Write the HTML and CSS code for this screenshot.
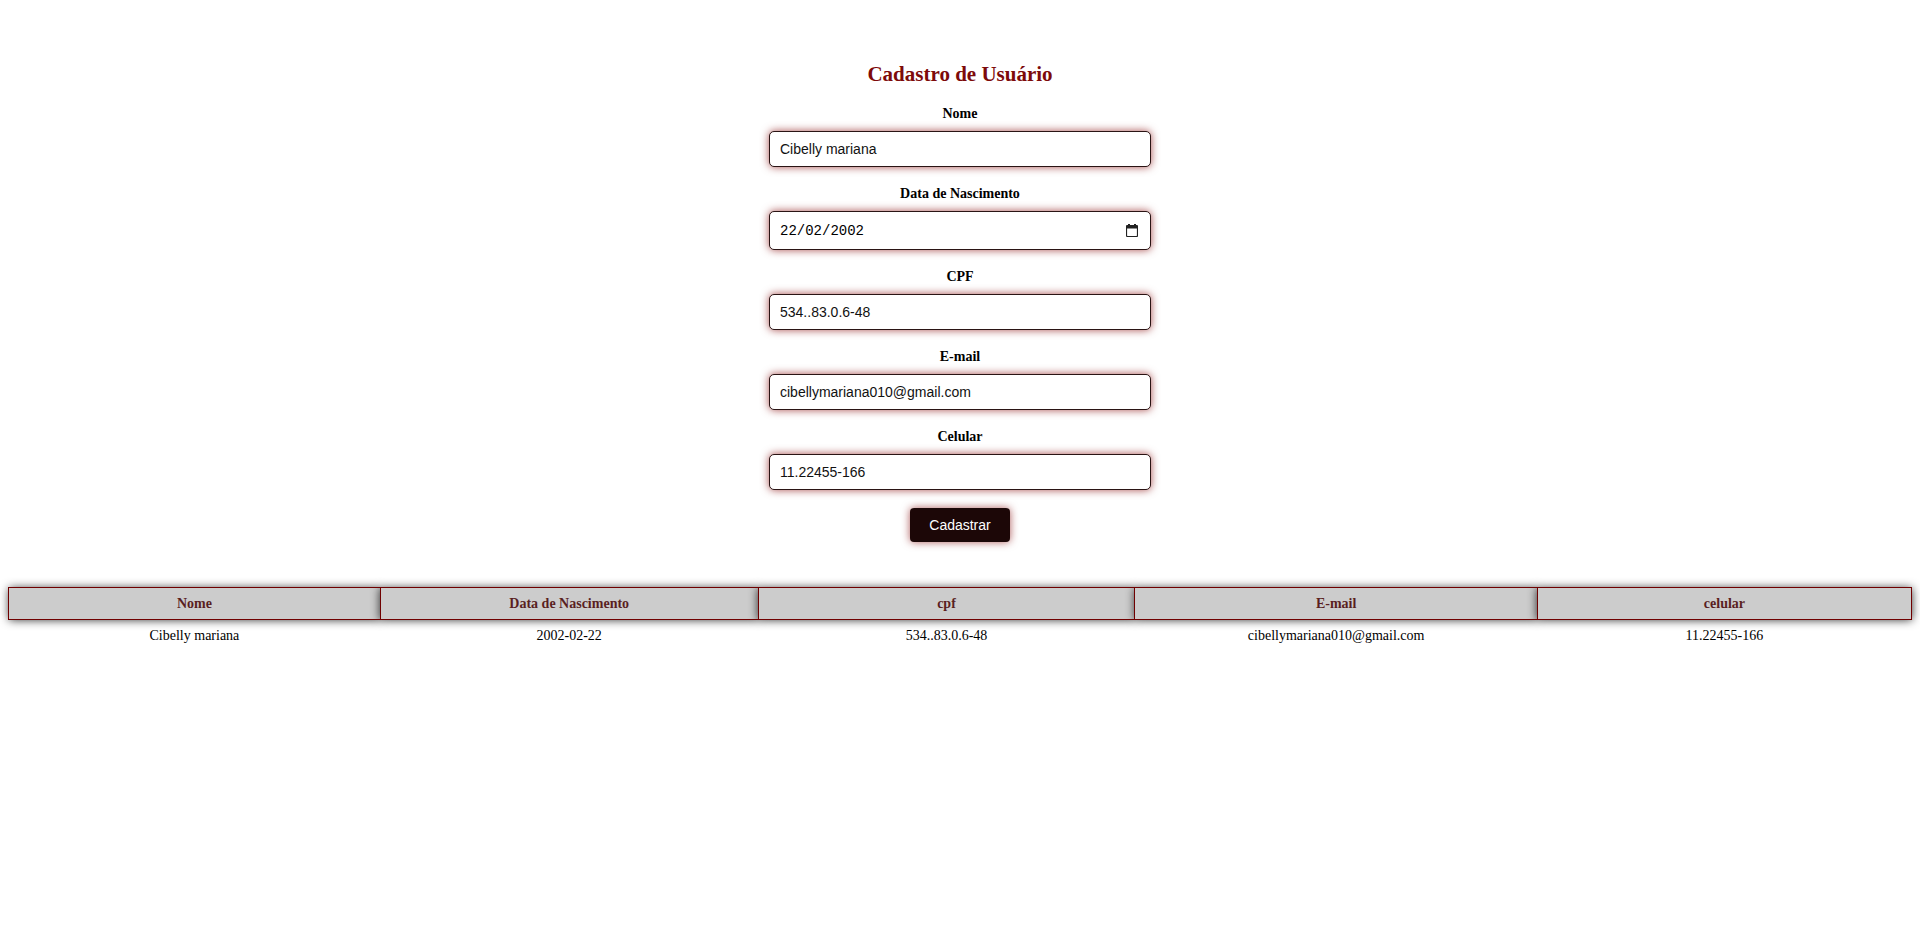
FILE: index.html
```html
<!DOCTYPE html>
<html lang="pt-BR">
<head>
<meta charset="utf-8">
<title>Cadastro de Usuário</title>
<link rel="stylesheet" href="styles.css">
</head>
<body>
<main class="page">
  <form class="form">
    <h2 class="title">Cadastro de Usuário</h2>
    <div class="field">
      <label class="label" for="nome">Nome</label>
      <input class="input" id="nome" type="text" value="Cibelly mariana">
    </div>
    <div class="field">
      <label class="label" for="nasc">Data de Nascimento</label>
      <div class="date-wrap">
        <input class="input input-date" id="nasc" type="text" value="22/02/2002">
        <svg class="cal-icon" width="12" height="13" viewBox="0 0 12 13" aria-hidden="true">
          <rect x="2" y="0" width="2" height="2" fill="#222"/>
          <rect x="8" y="0" width="2" height="2" fill="#222"/>
          <path d="M1.5 1.5h9a1 1 0 0 1 1 1v9a1 1 0 0 1-1 1h-9a1 1 0 0 1-1-1v-9a1 1 0 0 1 1-1z" fill="none" stroke="#222" stroke-width="1.2"/>
          <rect x="0.6" y="1.5" width="10.8" height="3" fill="#222"/>
        </svg>
      </div>
    </div>
    <div class="field">
      <label class="label" for="cpf">CPF</label>
      <input class="input" id="cpf" type="text" value="534..83.0.6-48">
    </div>
    <div class="field">
      <label class="label" for="email">E-mail</label>
      <input class="input" id="email" type="text" value="cibellymariana010@gmail.com">
    </div>
    <div class="field">
      <label class="label" for="cel">Celular</label>
      <input class="input" id="cel" type="text" value="11.22455-166">
    </div>
    <button class="btn" type="button">Cadastrar</button>
  </form>
  <table class="table">
    <thead>
      <tr>
        <th class="c1">Nome</th>
        <th class="c2">Data de Nascimento</th>
        <th class="c3">cpf</th>
        <th class="c4">E-mail</th>
        <th class="c5">celular</th>
      </tr>
    </thead>
    <tbody>
      <tr>
        <td>Cibelly mariana</td>
        <td>2002-02-22</td>
        <td>534..83.0.6-48</td>
        <td>cibellymariana010@gmail.com</td>
        <td>11.22455-166</td>
      </tr>
    </tbody>
  </table>
</main>
</body>
</html>
```
FILE: styles.css
```css
html, body {
  margin: 0;
  padding: 0;
  background: #ffffff;
}

body {
  padding: 0 8px;
  font-family: "Liberation Serif", "Times New Roman", serif;
  font-size: 14px;
  color: #000;
}

.page {
  display: flex;
  flex-direction: column;
  align-items: stretch;
}

.form {
  display: flex;
  flex-direction: column;
  align-items: center;
  padding-top: 62px;
}

.title {
  margin: 0 0 20px 0;
  font-size: 21px;
  line-height: 24px;
  font-weight: bold;
  color: #7d0a0a;
}

.field {
  display: flex;
  flex-direction: column;
  align-items: center;
  margin-bottom: 19px;
}

.label {
  font-weight: bold;
  font-size: 14px;
  line-height: 16px;
  margin-bottom: 9px;
}

.input {
  box-sizing: border-box;
  width: 382px;
  height: 36px;
  padding: 0 10px;
  border: 1px solid #2a1414;
  border-radius: 5px;
  background: #fff;
  font-family: "Liberation Sans", Arial, sans-serif;
  font-size: 14px;
  color: #111;
  box-shadow: 0 0 9px rgba(128, 0, 0, 0.7);
  outline: none;
}

.date-wrap {
  position: relative;
  width: 382px;
}

.input-date {
  display: block;
  height: 39px;
  font-family: "Liberation Mono", "Courier New", monospace;
  font-size: 14px;
  color: #000;
}

.cal-icon {
  position: absolute;
  right: 13px;
  top: 13px;
}

.btn {
  margin-top: -1px;
  box-sizing: border-box;
  width: 100px;
  height: 34px;
  border: none;
  border-radius: 4px;
  background: #1c0707;
  color: #ffffff;
  font-family: "Liberation Sans", Arial, sans-serif;
  font-size: 14px;
  box-shadow: 0 0 9px rgba(128, 0, 0, 0.65);
  cursor: pointer;
}

.table {
  margin-top: 45px;
  width: 100%;
  border-collapse: collapse;
}

.table th {
  padding: 8px 4px 7px;
  background: #cccccc;
  border: 1px solid #700000;
  color: #5a1f1f;
  font-size: 14px;
  line-height: 16px;
  font-weight: bold;
  box-shadow: 0 0 10px rgba(0, 0, 0, 0.8);
}

.table .c1 { width: 19.54%; }
.table .c2 { width: 19.85%; }
.table .c3 { width: 19.8%; }
.table .c4 { width: 21.15%; }
.table .c5 { width: 19.66%; }

.table td {
  padding: 8px 4px 4px;
  text-align: center;
  font-size: 14px;
  line-height: 16px;
}
```
